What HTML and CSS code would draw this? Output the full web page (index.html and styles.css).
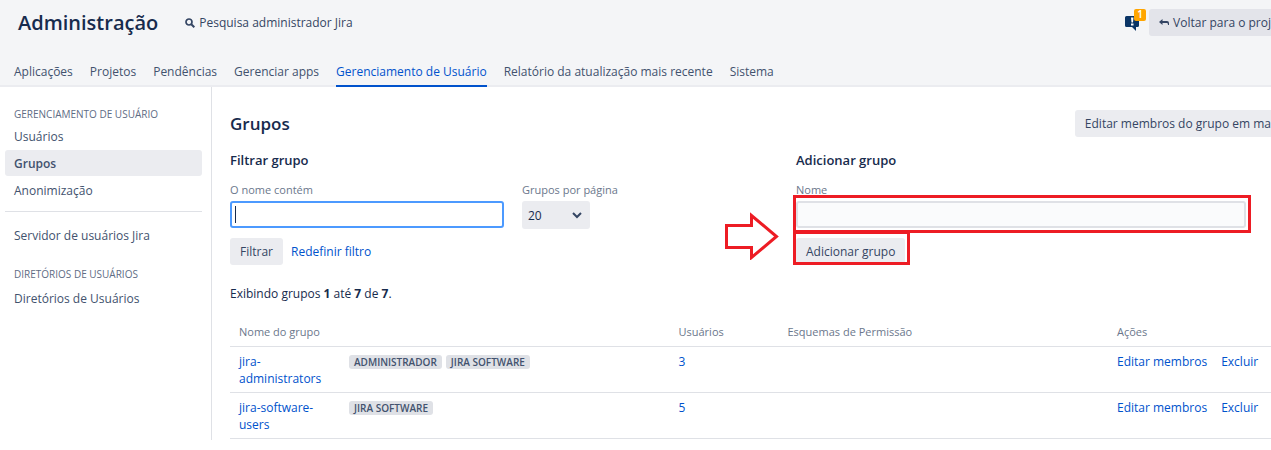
FILE: index.html
```html
<!DOCTYPE html>
<html lang="pt-BR">
<head>
<meta charset="utf-8">
<title>Grupos - Administração</title>
<link rel="stylesheet" href="styles.css">
</head>
<body>
<header class="admin-header">
  <div class="header-top">
    <h1 class="admin-title">Administração</h1>
    <a class="admin-search" href="#">
      <svg width="10" height="10" viewBox="0 0 10 10" fill="none" stroke="currentColor" aria-hidden="true"><circle cx="4" cy="4" r="3" stroke-width="1.7"/><path d="M6.3 6.3 9.3 9.3" stroke-width="2"/></svg>
      <span>Pesquisa administrador Jira</span>
    </a>
    <div class="header-actions">
      <button class="feedback" type="button" aria-label="Notificações">
        <svg width="15" height="16" viewBox="0 0 15 16" aria-hidden="true"><path d="M1.500 1h11q1.500 0 1.500 1.500v8q0 1.500-1.500 1.500H11v4L7 12H1.500Q0 12 0 10.500v-8Q0 1 1.500 1z" fill="#0a3566"/><path d="M6 2.500h2.500L8 7.500H6.500zM6 8.500h2.500v2H6z" fill="#fff"/></svg>
        <span class="feedback-count">1</span>
      </button>
      <button class="button button-back" type="button">
        <svg width="10" height="8" viewBox="0 0 10 8" aria-hidden="true"><path d="M0 3 3.500 0v2H8q2 0 2 2v2H9Q9 4 8 4H3.500v2z" fill="#344563"/></svg>
        <span>Voltar para o proj</span>
      </button>
    </div>
  </div>
  <nav class="tabs">
    <a class="tab" href="#">Aplicações</a>
    <a class="tab" href="#">Projetos</a>
    <a class="tab" href="#">Pendências</a>
    <a class="tab" href="#">Gerenciar apps</a>
    <a class="tab tab-active" href="#">Gerenciamento de Usuário</a>
    <a class="tab" href="#">Relatório da atualização mais recente</a>
    <a class="tab" href="#">Sistema</a>
  </nav>
</header>
<div class="page">
  <nav class="sidebar">
    <h2 class="side-heading">Gerenciamento de Usuário</h2>
    <a class="side-link" href="#">Usuários</a>
    <a class="side-link side-link-active" href="#">Grupos</a>
    <a class="side-link" href="#">Anonimização</a>
    <hr class="side-rule">
    <a class="side-link" href="#">Servidor de usuários Jira</a>
    <h2 class="side-heading side-heading-next">Diretórios de Usuários</h2>
    <a class="side-link" href="#">Diretórios de Usuários</a>
  </nav>
  <main class="content">
    <div class="content-head">
      <h2 class="content-title">Grupos</h2>
      <button class="button button-bulk" type="button">Editar membros do grupo em ma</button>
    </div>
    <div class="forms">
      <form class="form">
        <h3 class="form-title">Filtrar grupo</h3>
        <div class="fields">
          <div class="field field-filter">
            <label class="label" for="filter-name">O nome contém</label>
            <div class="focus-box">
              <input class="input input-focus" id="filter-name" type="text">
              <span class="caret"></span>
            </div>
          </div>
          <div class="field">
            <label class="label" for="per-page">Grupos por página</label>
            <select class="select" id="per-page"><option>20</option><option>50</option><option>100</option></select>
          </div>
        </div>
        <div class="form-actions">
          <button class="button" type="button">Filtrar</button>
          <a class="link" href="#">Redefinir filtro</a>
        </div>
      </form>
      <form class="form form-add">
        <h3 class="form-title">Adicionar grupo</h3>
        <div class="field">
          <label class="label" for="group-name">Nome</label>
          <div class="marked marked-input"><input class="input" id="group-name" type="text"></div>
        </div>
        <div class="form-actions">
          <div class="marked marked-button"><button class="button" type="button">Adicionar grupo</button></div>
        </div>
        <svg class="arrow" width="55" height="48" viewBox="0 0 55 48" fill="#fff" stroke="#ed1c24" stroke-width="3" aria-hidden="true"><path d="M2.500 13.500H27.500V3.500L52.500 24.500 27.500 45.500V35.500H2.500z"/></svg>
      </form>
    </div>
    <p class="summary">Exibindo grupos <b>1</b> até <b>7</b> de <b>7</b>.</p>
    <table class="groups">
      <colgroup><col class="col-name"><col><col class="col-users"><col><col class="col-actions"></colgroup>
      <thead>
        <tr><th>Nome do grupo</th><th></th><th>Usuários</th><th>Esquemas de Permissão</th><th>Ações</th></tr>
      </thead>
      <tbody>
        <tr>
          <td><a class="link" href="#">jira-administrators</a></td>
          <td><div class="lozenges"><span class="lozenge">Administrador</span><span class="lozenge">Jira Software</span></div></td>
          <td><a class="link" href="#">3</a></td>
          <td></td>
          <td><div class="actions"><a class="link" href="#">Editar membros</a><a class="link" href="#">Excluir</a></div></td>
        </tr>
        <tr>
          <td><a class="link" href="#">jira-software-users</a></td>
          <td><div class="lozenges"><span class="lozenge">Jira Software</span></div></td>
          <td><a class="link" href="#">5</a></td>
          <td></td>
          <td><div class="actions"><a class="link" href="#">Editar membros</a><a class="link" href="#">Excluir</a></div></td>
        </tr>
      </tbody>
    </table>
  </main>
</div>
</body>
</html>
```
FILE: styles.css
```css
* { box-sizing: border-box; }
body {
  margin: 0;
  overflow-x: hidden;
  background: #fff;
  color: #172b4d;
  font: 12px/17px "Open Sans", "Noto Sans", sans-serif;
}
h1, h2, h3, p { margin: 0; }
a { text-decoration: none; }
button, input, select { font: inherit; }
.link { color: #0052cc; }

.admin-header { background: #f4f5f7; }
.header-top { display: flex; align-items: center; height: 45px; padding-left: 18px; }
.admin-title { font-size: 20px; line-height: 28px; font-weight: 600; margin-right: 27px; }
.admin-search { display: flex; align-items: center; gap: 4px; color: #344563; }
.header-actions { display: flex; align-items: center; gap: 8px; margin-left: auto; }
.feedback { position: relative; display: flex; padding: 0; margin-right: 1px; border: 0; background: none; }
.feedback-count {
  position: absolute;
  left: 9px;
  top: -6px;
  width: 12px;
  height: 12px;
  border-radius: 2px;
  background: #ffa500;
  color: #fff;
  font-size: 10px;
  line-height: 11px;
  font-weight: 600;
  text-align: center;
}
.button {
  height: 27px;
  padding: 0 10px;
  border: 0;
  border-radius: 3px;
  background: #ebecf0;
  color: #344563;
  white-space: nowrap;
}
.button-back { display: flex; align-items: center; gap: 4px; padding-right: 0; border-radius: 3px 0 0 3px; background: #e3e4ea; }
.button-bulk { padding-right: 0; border-radius: 3px 0 0 3px; }

.tabs { display: flex; gap: 17px; padding: 0 14px; box-shadow: inset 0 -2px #ebecf0; }
.tab { padding: 18px 0 5px; border-bottom: 2px solid transparent; color: #42526e; white-space: nowrap; }
.tab-active { border-color: #0052cc; color: #0052cc; font-weight: 500; }

.page { display: flex; }
.sidebar { flex: none; width: 212px; padding: 19px 9px 128px 5px; border-right: 1px solid #dfe1e6; }
.side-heading { padding: 0 9px; margin-bottom: 1px; color: #5e6c84; font-size: 10px; line-height: 16px; font-weight: 500; text-transform: uppercase; white-space: nowrap; }
.side-heading-next { margin-top: 18px; margin-bottom: 3px; }
.side-link { display: block; padding: 1px 9px 0; margin-bottom: 1px; border-radius: 3px; color: #42526e; line-height: 25px; }
.side-link-active { background: #ebecf0; font-weight: 600; }
.side-rule { height: 1px; margin: 8px 0 10px; border: 0; background: #dfe1e6; }

.content { flex: 1; min-width: 0; padding: 23px 0 0 18px; }
.content-head { display: flex; justify-content: space-between; align-items: center; }
.content-title { font-size: 17px; line-height: 26px; font-weight: 600; }
.forms { display: grid; grid-template-columns: 566px 1fr; margin-top: 14px; }
.form-title { font-size: 13px; line-height: 18px; font-weight: 600; }
.fields { display: flex; gap: 18px; }
.field { display: flex; flex-direction: column; align-items: flex-start; }
.field-filter { width: 274px; }
.label { margin-top: 12px; margin-bottom: 3px; color: #6b778c; font-size: 11px; line-height: 17px; }
.focus-box { position: relative; width: 100%; }
.input {
  display: block;
  width: 100%;
  height: 27px;
  padding: 0 4px;
  border: 2px solid #dfe1e6;
  border-radius: 3px;
  background: #fafbfc;
  color: #172b4d;
  outline: 0;
}
.input-focus { border-color: #4c9aff; background: #fff; }
.caret { position: absolute; left: 5px; top: 5px; width: 1px; height: 17px; background: #172b4d; }
.select {
  width: 68px;
  height: 28px;
  padding: 0 6px;
  border: 0;
  border-radius: 3px;
  appearance: none;
  background: #ebecf0 url("data:image/svg+xml,%3Csvg xmlns='http://www.w3.org/2000/svg' width='10' height='7' fill='none' stroke='%23344563' stroke-width='2'%3E%3Cpath d='M1 1l4 4 4-4'/%3E%3C/svg%3E") no-repeat right 8px center;
  color: #172b4d;
}
.form-actions { display: flex; align-items: center; gap: 8px; margin-top: 9px; }
.form-add { position: relative; padding-right: 25px; }
.form-add .form-actions { margin-top: 10px; }
.marked { position: relative; }
.marked::after { content: ""; position: absolute; border: 3px solid #ed1c24; pointer-events: none; }
.marked-input { width: 100%; }
.marked-input::after { inset: -6px -5px -5px -3px; }
.marked-button::after { inset: -7px -5px 0 -3px; }
.arrow { position: absolute; left: -72px; top: 61px; }

.summary { margin-top: 20px; }
.groups { width: 100%; margin-top: 15px; border-collapse: collapse; table-layout: fixed; }
.col-name { width: 110px; }
.col-users { width: 109px; }
.col-actions { width: 163px; }
.groups th { padding: 6px 9px; border-bottom: 1px solid #dfe1e6; color: #6b778c; font-size: 11px; font-weight: 500; text-align: left; white-space: nowrap; }
.groups td { padding: 6px 9px 5px; border-bottom: 1px solid #dfe1e6; vertical-align: top; }
.lozenges { display: flex; gap: 4px; padding-top: 2px; }
.lozenge { padding: 0 5px; border-radius: 3px; background: #dfe1e6; color: #42526e; font-size: 10px; line-height: 14px; font-weight: 600; text-transform: uppercase; white-space: nowrap; }
.actions { display: flex; gap: 14px; white-space: nowrap; }
```
